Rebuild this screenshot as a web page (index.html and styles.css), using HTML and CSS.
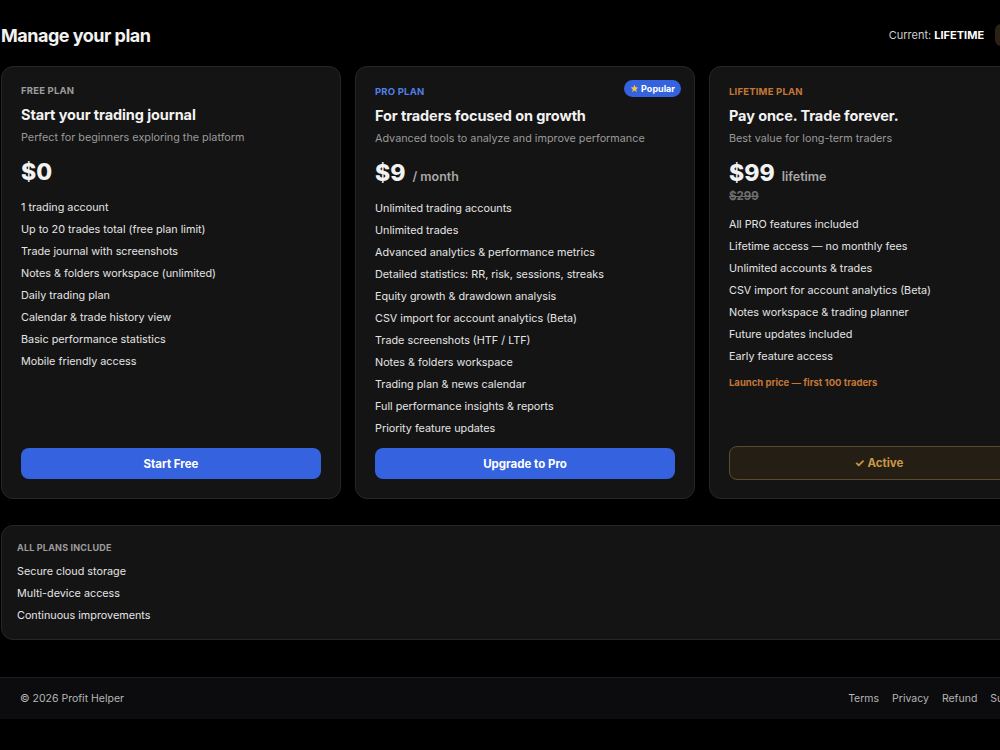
FILE: index.html
```html
<!DOCTYPE html>
<html lang="en">
<head>
  <meta charset="UTF-8" />
  <meta name="viewport" content="width=device-width, initial-scale=1.0" />
  <title>Manage your plan — Profit Helper</title>
  <link rel="stylesheet" href="styles.css">
</head>
<body>
  <div class="page">
    <header class="page-header">
      <h1>Manage your plan</h1>
      <div class="current">
        <span>Current: <strong>LIFETIME</strong></span>
        <span class="current-badge">Lifetime</span>
      </div>
    </header>

    <section class="plans">
      <div class="card">
        <div class="plan-label">FREE PLAN</div>
        <h2 class="plan-title">Start your trading journal</h2>
        <p class="plan-sub">Perfect for beginners exploring the platform</p>
        <div class="price">$0</div>
        <ul class="features">
          <li>1 trading account</li>
          <li>Up to 20 trades total (free plan limit)</li>
          <li>Trade journal with screenshots</li>
          <li>Notes &amp; folders workspace (unlimited)</li>
          <li>Daily trading plan</li>
          <li>Calendar &amp; trade history view</li>
          <li>Basic performance statistics</li>
          <li>Mobile friendly access</li>
        </ul>
        <button class="plan-button">Start Free</button>
      </div>

      <div class="card pro">
        <span class="popular">
          <svg width="9" height="9" viewBox="0 0 24 24"><path d="M12 2l2.9 6.6 7.1.7-5.4 4.8 1.6 7-6.2-3.7-6.2 3.7 1.6-7L2 9.3l7.1-.7z" fill="#f5c542"/></svg>
          Popular
        </span>
        <div class="plan-label">PRO PLAN</div>
        <h2 class="plan-title">For traders focused on growth</h2>
        <p class="plan-sub">Advanced tools to analyze and improve performance</p>
        <div class="price">$9 <span class="period">/ month</span></div>
        <ul class="features">
          <li>Unlimited trading accounts</li>
          <li>Unlimited trades</li>
          <li>Advanced analytics &amp; performance metrics</li>
          <li>Detailed statistics: RR, risk, sessions, streaks</li>
          <li>Equity growth &amp; drawdown analysis</li>
          <li>CSV import for account analytics (Beta)</li>
          <li>Trade screenshots (HTF / LTF)</li>
          <li>Notes &amp; folders workspace</li>
          <li>Trading plan &amp; news calendar</li>
          <li>Full performance insights &amp; reports</li>
          <li>Priority feature updates</li>
        </ul>
        <button class="plan-button">Upgrade to Pro</button>
      </div>

      <div class="card lifetime">
        <div class="plan-label">LIFETIME PLAN</div>
        <h2 class="plan-title">Pay once. Trade forever.</h2>
        <p class="plan-sub">Best value for long-term traders</p>
        <div class="price">$99 <span class="period">lifetime</span></div>
        <div class="old-price">$299</div>
        <ul class="features">
          <li>All PRO features included</li>
          <li>Lifetime access — no monthly fees</li>
          <li>Unlimited accounts &amp; trades</li>
          <li>CSV import for account analytics (Beta)</li>
          <li>Notes workspace &amp; trading planner</li>
          <li>Future updates included</li>
          <li>Early feature access</li>
        </ul>
        <p class="launch">Launch price — first 100 traders</p>
        <button class="plan-button active">✓ Active</button>
      </div>
    </section>

    <section class="includes">
      <div class="plan-label">ALL PLANS INCLUDE</div>
      <ul class="features">
        <li>Secure cloud storage</li>
        <li>Multi-device access</li>
        <li>Continuous improvements</li>
      </ul>
    </section>
  </div>

  <footer class="footer">
    <span>© 2026 Profit Helper</span>
    <nav class="footer-links">
      <a href="#">Terms</a>
      <a href="#">Privacy</a>
      <a href="#">Refund</a>
      <a href="#">Support</a>
    </nav>
  </footer>
</body>
</html>
```

FILE: styles.css
```css
:root {
  --bg: #000;
  --card-bg: #141414;
  --card-border: #262626;
  --text: #f2f2f2;
  --muted: #9a9a9a;
  --blue: #3563e0;
  --blue-text: #4f7fe6;
  --orange: #c47736;
}

* {
  box-sizing: border-box;
  margin: 0;
  padding: 0;
  font-family: 'Inter', sans-serif;
}

html {
  overflow-x: hidden;
}

body {
  background: var(--bg);
  color: var(--text);
  width: 1050px;
}

.page {
  padding: 23px 0 0 1px;
}

.page-header {
  display: flex;
  justify-content: space-between;
  align-items: center;
  height: 24px;
  margin-bottom: 19px;
}

h1 {
  font-size: 18px;
  font-weight: 700;
  letter-spacing: -0.5px;
}

.current {
  display: flex;
  align-items: center;
  gap: 11px;
  font-size: 11px;
  color: #cfcfcf;
}

.current strong {
  color: #fff;
  font-weight: 700;
}

.current-badge {
  background: #2b2215;
  color: #d7a24c;
  font-size: 10px;
  font-weight: 600;
  padding: 5px 8px;
  border-radius: 6px;
}

.plans {
  display: grid;
  grid-template-columns: repeat(3, 340px);
  gap: 14px;
}

.card {
  position: relative;
  display: flex;
  flex-direction: column;
  background: var(--card-bg);
  border: 1px solid var(--card-border);
  border-radius: 12px;
  padding: 17px 19px 19px;
}

.pro,
.lifetime {
  padding-top: 18px;
}

.plan-label {
  font-size: 9.5px;
  font-weight: 700;
  letter-spacing: 0.2px;
  line-height: 14px;
  color: #9c9c9c;
}

.pro .plan-label {
  color: var(--blue-text);
}

.lifetime .plan-label {
  color: var(--orange);
}

.plan-title {
  font-size: 14.5px;
  font-weight: 700;
  line-height: 20px;
  margin-top: 7px;
  letter-spacing: -0.1px;
}

.plan-sub {
  font-size: 10.8px;
  line-height: 16px;
  color: var(--muted);
  margin-top: 5px;
}

.price {
  font-size: 23px;
  font-weight: 800;
  line-height: 30px;
  margin-top: 11px;
}

.period {
  font-size: 12.5px;
  font-weight: 600;
  line-height: 1;
  color: #a8a8a8;
  margin-left: 2px;
}

.old-price {
  font-size: 11.5px;
  font-weight: 700;
  color: #6e6e6e;
  text-decoration: line-through;
  line-height: 16px;
}

.features {
  list-style: none;
  margin-top: 10px;
}

.features li {
  font-size: 10.8px;
  line-height: 22px;
  color: #e4e4e4;
}

.pro .features {
  margin-bottom: 8px;
}

.lifetime .features {
  margin-top: 10px;
}

.launch {
  font-size: 9.5px;
  font-weight: 700;
  color: var(--orange);
  margin-top: 9px;
}

.plan-button {
  margin-top: auto;
  height: 31px;
  border: none;
  border-radius: 8px;
  background: var(--blue);
  color: #fff;
  font-size: 11.5px;
  font-weight: 700;
  cursor: pointer;
}

.plan-button.active {
  height: 34px;
  background: #241e14;
  border: 1px solid #5c4a2c;
  color: #c99846;
  margin-bottom: -1px;
}

.popular {
  position: absolute;
  top: 13px;
  right: 13px;
  display: flex;
  align-items: center;
  gap: 2px;
  background: var(--blue);
  color: #fff;
  font-size: 9px;
  font-weight: 700;
  padding: 3px 6px;
  border-radius: 10px;
}

.includes {
  margin-top: 26px;
  background: var(--card-bg);
  border: 1px solid var(--card-border);
  border-radius: 12px;
  padding: 15px 15px 12px;
}

.includes .plan-label {
  font-size: 9px;
}

.includes .features {
  margin-top: 6px;
}

.footer {
  margin-top: 37px;
  height: 42px;
  background: #0c0c0e;
  border-top: 1px solid #1e1e20;
  display: flex;
  align-items: center;
  justify-content: space-between;
  padding: 0 20px;
  font-size: 10.5px;
  color: #b5b5b5;
}

.footer-links {
  display: flex;
  gap: 13px;
}

.footer-links a {
  color: #b5b5b5;
  text-decoration: none;
}
```
